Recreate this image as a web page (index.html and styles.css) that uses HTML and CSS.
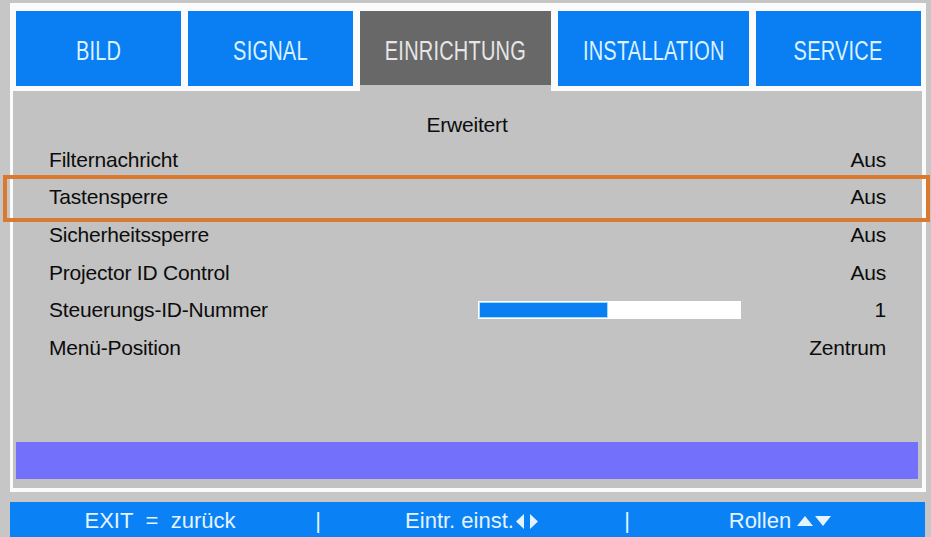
FILE: index.html
```html
<!DOCTYPE html>
<html lang="de">
<head>
<meta charset="utf-8">
<title>Einrichtung - Erweitert</title>
<link rel="stylesheet" href="styles.css">
</head>
<body>
<div class="screen">
  <div class="frame">
    <div class="tabs">
      <div class="tab"><span class="tab-label">BILD</span></div>
      <div class="tab"><span class="tab-label">SIGNAL</span></div>
      <div class="tab active"><span class="tab-label">EINRICHTUNG</span></div>
      <div class="tab"><span class="tab-label">INSTALLATION</span></div>
      <div class="tab"><span class="tab-label">SERVICE</span></div>
    </div>
    <div class="content">
      <div class="title">Erweitert</div>
      <div class="rows">
        <div class="row"><span class="label">Filternachricht</span><span class="value">Aus</span></div>
        <div class="row selected"><span class="label">Tastensperre</span><span class="value">Aus</span></div>
        <div class="row"><span class="label">Sicherheitssperre</span><span class="value">Aus</span></div>
        <div class="row"><span class="label">Projector ID Control</span><span class="value">Aus</span></div>
        <div class="row"><span class="label">Steuerungs-ID-Nummer</span><span class="slider"><span class="slider-fill" style="width:49%"></span></span><span class="value">1</span></div>
        <div class="row"><span class="label">Menü-Position</span><span class="value">Zentrum</span></div>
      </div>
      <div class="spacer"></div>
      <div class="info-bar"></div>
    </div>
  </div>
  <div class="footer">
    <span class="hint">EXIT&nbsp; = &nbsp;zurück</span>
    <span class="sep">|</span>
    <span class="hint">Eintr. einst.<svg class="arrows lr" width="24" height="15" viewBox="0 0 24 15"><polygon points="8,0 8,15 0,7.5" fill="currentColor"/><polygon points="14,0 14,15 22,7.5" fill="currentColor"/></svg></span>
    <span class="sep">|</span>
    <span class="hint">Rollen <svg class="arrows ud" width="34" height="10" viewBox="0 0 34 10"><polygon points="0,10 16,10 8,0" fill="currentColor"/><polygon points="18,0 34,0 26,10" fill="currentColor"/></svg></span>
  </div>
</div>
</body>
</html>
```

FILE: styles.css
```css
html, body {
  margin: 0;
  padding: 0;
  background: #c6c6c6;
  overflow: hidden;
}

body {
  font-family: "Liberation Sans", Arial, sans-serif;
}

.screen {
  width: 931px;
  height: 537px;
  padding: 3px 0 0 10px;
  box-sizing: border-box;
}

.frame {
  width: 916px;
  background: #fbfbfb;
  padding: 8px 4px 4px 3px;
  box-sizing: border-box;
}

.tabs {
  display: flex;
  gap: 7px;
  margin: 0 1px 0 3px;
  height: 80px;
}

.tab {
  flex: 1;
  background: #0a7ff4;
  border-bottom: 5px solid #fbfbfb;
  box-sizing: border-box;
  display: flex;
  align-items: center;
  justify-content: center;
  padding-top: 6px;
  color: #dcf2ff;
}

.tab.active {
  background: #686868;
  border-bottom: 6px solid #c2c2c2;
  color: #e6e6e6;
}

.tab-label {
  display: inline-block;
  font-size: 27px;
  letter-spacing: 0.3px;
  transform: scaleX(0.74);
  white-space: nowrap;
}

.content {
  height: 397px;
  background: #c2c2c2;
  padding: 18px 4px 9px 3px;
  box-sizing: border-box;
  display: flex;
  flex-direction: column;
  color: #0c0c0c;
  font-size: 21px;
  letter-spacing: -0.2px;
}

.title {
  height: 32px;
  line-height: 32px;
  text-align: center;
}

.rows {
  padding: 0 32px 0 33px;
}

.row {
  position: relative;
  display: grid;
  grid-template-columns: 429px 263px 1fr;
  align-items: center;
  height: 37.6px;
  line-height: 26px;
}

.row .label {
  grid-column: 1;
  white-space: nowrap;
}

.row .value {
  grid-column: 3;
  text-align: right;
  white-space: nowrap;
}

.row.selected::after {
  content: "";
  position: absolute;
  top: -4px;
  bottom: -6px;
  left: -46px;
  right: -44px;
  border: 4px solid #d97a2e;
}

.slider {
  grid-column: 2;
  height: 18px;
  background: #ffffff;
  padding: 2px;
  box-sizing: border-box;
  display: flex;
}

.slider-fill {
  display: block;
  height: 100%;
  background: #0a7ff4;
  box-shadow: 0 0 0 1px #9fdcff;
}

.spacer {
  flex: 1;
}

.info-bar {
  height: 37px;
  background: #7371fc;
}

.footer {
  margin-top: 10px;
  width: 915px;
  height: 35px;
  background: #0a82f6;
  color: #e4f3ff;
  font-size: 22px;
  padding-top: 3px;
  box-sizing: border-box;
  line-height: 32px;
  display: grid;
  grid-template-columns: 300px 16px 293px 16px 1fr;
  text-align: center;
}

.sep {
  font-size: 22px;
}

.hint {
  white-space: nowrap;
}

.arrows {
  display: inline-block;
  vertical-align: -1px;
}

.arrows.lr {
  margin-left: 2px;
}

.arrows.ud {
  vertical-align: 2px;
}
```
